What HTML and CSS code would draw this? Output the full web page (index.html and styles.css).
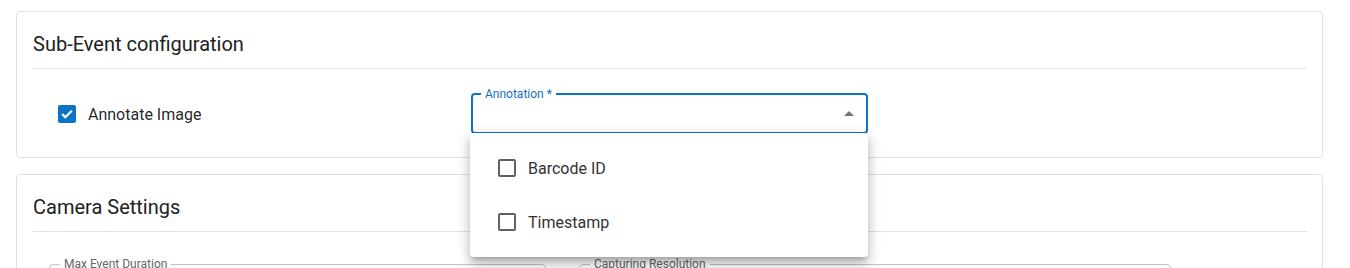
FILE: index.html
```html
<!DOCTYPE html>
<html lang="en">
<head>
    <meta charset="UTF-8">
    <title>Sub-Event configuration</title>
    <meta name="viewport" content="width=device-width, initial-scale=1.0">
    <link rel="stylesheet" href="styles.css">
</head>
<body>

<div class="page">

    <section class="card">
        <div class="card-header">
            <h2>Sub-Event configuration</h2>
        </div>
        <div class="card-body sub-event">
            <label class="check-row">
                <span class="checkbox checked">
                    <svg width="14" height="14" viewBox="0 0 14 14"><path d="M2.2 7.1l3.1 3.1 6.5-6.5" fill="none" stroke="#fff" stroke-width="2.2"/></svg>
                </span>
                <span class="check-label">Annotate Image</span>
            </label>

            <div class="select-wrap">
                <fieldset class="select focused">
                    <legend>Annotation *</legend>
                    <span class="select-value"></span>
                    <svg class="arrow" width="10" height="5" viewBox="0 0 10 5"><path d="M0 5l5-5 5 5z" fill="#757575"/></svg>
                </fieldset>

                <ul class="menu">
                    <li class="menu-item">
                        <span class="checkbox"></span>
                        <span>Barcode ID</span>
                    </li>
                    <li class="menu-item">
                        <span class="checkbox"></span>
                        <span>Timestamp</span>
                    </li>
                </ul>
            </div>
        </div>
    </section>

    <section class="card">
        <div class="card-header">
            <h2>Camera Settings</h2>
        </div>
        <div class="card-body camera">
            <fieldset class="field field-duration">
                <legend>Max Event Duration</legend>
            </fieldset>
            <fieldset class="field field-resolution">
                <legend>Capturing Resolution</legend>
            </fieldset>
        </div>
    </section>

</div>

</body>
</html>
```

FILE: styles.css
```css
body {
    font-family: Roboto, "Noto Sans", Arial, sans-serif;
    background-color: #ffffff;
    color: rgba(0, 0, 0, 0.87);
    margin: 0;
}

.page {
    padding: 11px 27px 0 16px;
    display: flex;
    flex-direction: column;
    gap: 16px;
}

.card {
    border: 1px solid #e0e0e0;
    border-radius: 4px;
    padding: 0 15px 0 16px;
    background-color: #fff;
}

.card-header {
    padding: 18px 0 10px;
    border-bottom: 1px solid #e0e0e0;
}

.card-header h2 {
    margin: 0;
    font-size: 20px;
    font-weight: 400;
    line-height: 28px;
    color: #212121;
}

/* Sub-event row */
.sub-event {
    display: flex;
    align-items: center;
    padding: 25px 0 23px;
}

.check-row {
    width: 413px;
    padding-left: 25px;
    display: flex;
    align-items: center;
    gap: 12px;
    font-size: 16px;
}

.checkbox {
    width: 18px;
    height: 18px;
    box-sizing: border-box;
    border: 2px solid #616161;
    border-radius: 2px;
    display: inline-flex;
    align-items: center;
    justify-content: center;
    flex-shrink: 0;
}

.checkbox.checked {
    background-color: #0f73c5;
    border-color: #0f73c5;
}

.select-wrap {
    position: relative;
    width: 397px;
}

.select {
    margin: -6px 0 0;
    height: 46px;
    box-sizing: border-box;
    padding: 0 12px 0 8px;
    border: 2px solid #0f73c5;
    border-radius: 4px;
    display: flex;
    align-items: center;
    justify-content: space-between;
}

.select legend {
    font-size: 12px;
    line-height: 12px;
    padding: 0 4px;
    color: #0f73c5;
}

.select .arrow {
    margin-top: -6px;
}

/* Open dropdown */
.menu {
    position: absolute;
    top: 39px;
    left: -1px;
    width: 398px;
    margin: 0;
    padding: 8px 0;
    list-style: none;
    background-color: #fff;
    border-radius: 4px;
    box-shadow: 0 5px 5px -3px rgba(0,0,0,0.2), 0 8px 10px 1px rgba(0,0,0,0.14), 0 3px 14px 2px rgba(0,0,0,0.12);
    z-index: 10;
}

.menu-item {
    height: 54px;
    padding-left: 28px;
    display: flex;
    align-items: center;
    gap: 12px;
    font-size: 16px;
    color: #333;
}

/* Camera settings */
.camera {
    display: flex;
    gap: 33px;
    padding: 26px 0 20px 16px;
}

.field {
    margin: 0;
    height: 46px;
    box-sizing: border-box;
    padding: 0 10px;
    border: 1px solid #c4c4c4;
    border-radius: 4px;
}

.field legend {
    font-size: 12px;
    line-height: 12px;
    padding: 0 4px;
    color: #666;
}

.field-duration {
    width: 497px;
}

.field-resolution {
    width: 592px;
}
```
